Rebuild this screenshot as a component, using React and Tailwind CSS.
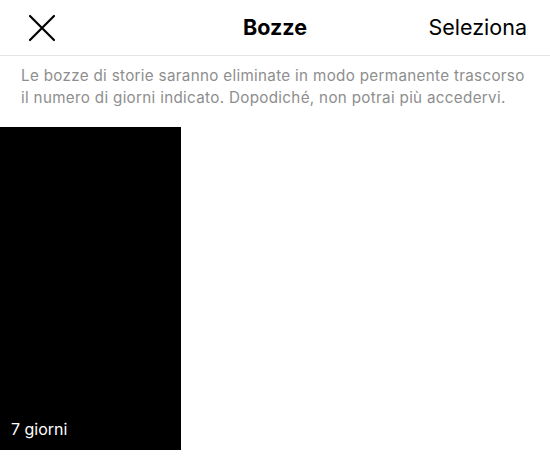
import React from 'react';

const CloseIcon = () => (
  <svg width="28" height="28" viewBox="0 0 28 28" fill="none" stroke="#000" strokeWidth="2.2" strokeLinecap="round">
    <path d="M2 2 L26 26 M26 2 L2 26" />
  </svg>
);

const App = () => {
  return (
    <div className="w-[550px] h-[474px] bg-white overflow-hidden" style={{ fontFamily: 'Inter, "Liberation Sans", sans-serif' }}>
      <div className="h-[56px] flex items-center justify-between border-b border-[#e4e4e4] pl-[28px] pr-[23px]">
        <div className="w-[110px] flex items-center">
          <CloseIcon />
        </div>
        <div className="text-[21.5px] font-bold text-black mr-[5px]">Bozze</div>
        <div className="w-[110px] flex justify-end text-[21.5px] text-black">Seleziona</div>
      </div>
      <p className="px-[21px] pt-[9px] text-[15.2px] tracking-[0.32px] leading-[22px] text-[#8e8e8e] whitespace-nowrap">
        Le bozze di storie saranno eliminate in modo permanente trascorso
        <br />
        il numero di giorni indicato. Dopodiché, non potrai più accedervi.
      </p>
      <div className="mt-[18px] w-[181px] h-[323px] bg-black flex items-end px-[11px] pb-[9px]">
        <span className="text-white text-[16px]">7 giorni</span>
      </div>
    </div>
  );
};

export default App;
